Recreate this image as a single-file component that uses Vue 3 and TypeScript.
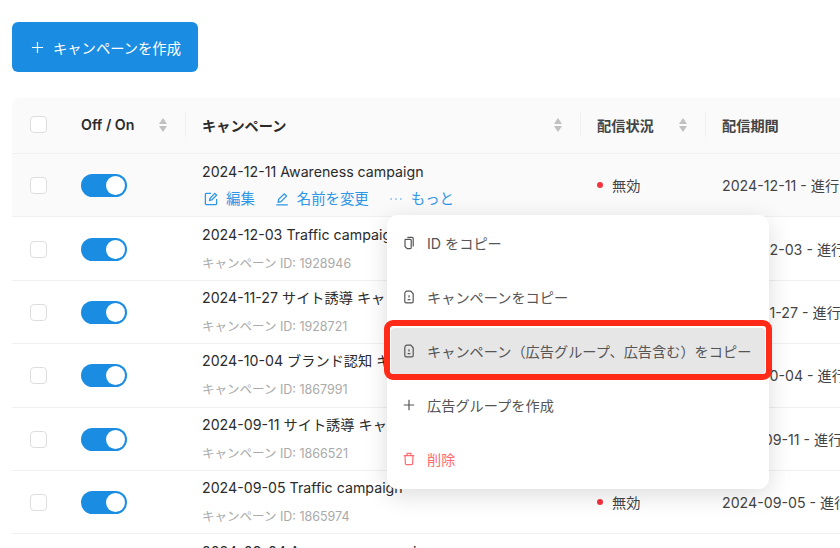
<script setup lang="ts">
interface Row { title: string; id: string; start: string }
const rows: Row[] = [
  { title: '2024-12-11 Awareness campaign', id: '', start: '2024-12-11' },
  { title: '2024-12-03 Traffic campaign', id: '1928946', start: '2024-12-03' },
  { title: '2024-11-27 サイト誘導 キャンペーン', id: '1928721', start: '2024-11-27' },
  { title: '2024-10-04 ブランド認知 キャンペーン', id: '1867991', start: '2024-10-04' },
  { title: '2024-09-11 サイト誘導 キャンペーン', id: '1866521', start: '2024-09-11' },
  { title: '2024-09-05 Traffic campaign', id: '1865974', start: '2024-09-05' },
  { title: '2024-09-04 Awareness campaign', id: '1865901', start: '2024-09-04' },
]
</script>

<template>
  <div class="page">
    <button class="create">
      <svg class="plus" viewBox="0 0 14 14"><path d="M7 1v12M1 7h12" /></svg>
      <span>キャンペーンを作成</span>
    </button>

    <div class="table">
      <div class="row head">
        <div class="c-check"><span class="check"></span></div>
        <div class="c-switch hcell">
          <span>Off / On</span>
          <span class="sort"><i class="up"></i><i class="down"></i></span>
        </div>
        <div class="c-name hcell">
          <span>キャンペーン</span>
          <span class="sort"><i class="up"></i><i class="down"></i></span>
        </div>
        <div class="c-status hcell">
          <span>配信状況</span>
          <span class="sort"><i class="up"></i><i class="down"></i></span>
        </div>
        <div class="c-period hcell"><span>配信期間</span></div>
      </div>

      <div v-for="(r, i) in rows" :key="r.title" class="row body" :class="{ hover: i === 0 }">
        <div class="c-check"><span class="check"></span></div>
        <div class="c-switch"><span class="switch"><span class="knob"></span></span></div>
        <div class="c-name">
          <div class="title">{{ r.title }}</div>
          <div v-if="i === 0" class="actions">
            <span class="action">
              <svg viewBox="0 0 14 14"><path d="M12.6 7v4.8a.8.8 0 0 1-.8.8H2.2a.8.8 0 0 1-.8-.8V2.2a.8.8 0 0 1 .8-.8H7M5.6 8.4l.4-2.2 4.8-4.8 1.8 1.8-4.8 4.8z" /></svg>
              編集
            </span>
            <span class="action">
              <svg viewBox="0 0 14 14"><path d="M1.2 12.8h11.6M3.2 10.2l.5-2.8 5.5-5.6 2.3 2.3-5.5 5.6z" /></svg>
              名前を変更
            </span>
            <span class="action">
              <svg viewBox="0 0 14 14"><path class="dots" d="M1.6 7h1M6.5 7h1M11.4 7h1" /></svg>
              もっと
            </span>
          </div>
          <div v-else class="sub">キャンペーン ID: {{ r.id }}</div>
        </div>
        <div class="c-status"><span class="dot"></span>無効</div>
        <div class="c-period">{{ r.start }} - 進行中</div>
      </div>
    </div>

    <div class="menu">
      <div class="item">
        <svg viewBox="0 0 14 14"><path d="M5.4 1.4h4.8a1 1 0 0 1 1 1v8M3.8 3.4h4.6a.8.8 0 0 1 .8.8v7.6a.8.8 0 0 1-.8.8H5.2L3 10.4V4.2a.8.8 0 0 1 .8-.8z" /></svg>
        <span>ID をコピー</span>
      </div>
      <div class="item">
        <svg viewBox="0 0 14 14"><path d="M5 1.2h3.8l2.4 2.6v7.6a1.4 1.4 0 0 1-1.4 1.4H4.2a1.4 1.4 0 0 1-1.4-1.4V3.4A2.2 2.2 0 0 1 5 1.2zM7 5.2v2.4M5.6 9.6h2.8" /></svg>
        <span>キャンペーンをコピー</span>
      </div>
      <div class="item active">
        <svg viewBox="0 0 14 14"><path d="M5 1.2h3.8l2.4 2.6v7.6a1.4 1.4 0 0 1-1.4 1.4H4.2a1.4 1.4 0 0 1-1.4-1.4V3.4A2.2 2.2 0 0 1 5 1.2zM7 5.2v2.4M5.6 9.6h2.8" /></svg>
        <span>キャンペーン（広告グループ、広告含む）をコピー</span>
        <span class="mark"></span>
      </div>
      <div class="item">
        <svg viewBox="0 0 14 14"><path d="M7 1.8v10.4M1.8 7h10.4" /></svg>
        <span>広告グループを作成</span>
      </div>
      <div class="item danger">
        <svg viewBox="0 0 14 14"><path d="M1.8 3.6h10.4M4.8 3.6l.4-2.2h3.6l.4 2.2M3 3.6l.4 8a1 1 0 0 0 1 1h5.2a1 1 0 0 0 1-1l.4-8" /></svg>
        <span>削除</span>
      </div>
    </div>
  </div>
</template>

<style>
html, body { margin: 0; overflow: hidden; background: #fff; }
</style>

<style scoped>
.page {
  position: relative;
  width: 840px;
  height: 548px;
  overflow: hidden;
  padding: 22px 0 0 12px;
  box-sizing: border-box;
  font-family: Inter, "Noto Sans CJK JP", sans-serif;
  font-size: 14.2px;
  color: #2b2b2b;
}
.create {
  display: flex;
  align-items: center;
  gap: 9px;
  width: 186px;
  height: 50px;
  padding: 0 0 0 19px;
  border: 0;
  border-radius: 6px;
  background: #1a8de3;
  color: #fff;
  font: inherit;
  font-size: 14.3px;
}
.plus { width: 13px; height: 13px; fill: none; stroke: #fff; stroke-width: 1.3; }
.table {
  width: 1000px;
  margin-top: 26px;
}
.row { display: flex; align-items: center; }
.head {
  height: 56px;
  padding-bottom: 2px;
  background: #fafafa;
  border-radius: 8px 0 0 0;
  border-bottom: 1px solid #f0f0f0;
  box-sizing: border-box;
  font-weight: 600;
  color: #2b2b2b;
}
.body {
  height: 63.4px;
  box-sizing: border-box;
  border-bottom: 1px solid #f0f0f0;
}
.hover { background: #fafafa; }
.c-check { width: 69px; padding-left: 18px; box-sizing: border-box; display: flex; }
.body .c-check, .body .c-switch { padding-top: 1px; }
.c-switch { width: 104px; box-sizing: border-box; }
.c-name { width: 395px; padding-left: 17px; box-sizing: border-box; white-space: nowrap; overflow: hidden; }
.c-status { width: 125px; padding-left: 17px; box-sizing: border-box; display: flex; align-items: center; color: #444; }
.c-period { flex: 1; padding-left: 17px; box-sizing: border-box; white-space: nowrap; color: #444; }
.hcell { position: relative; display: flex; align-items: center; justify-content: space-between; height: 24px; }
.c-switch.hcell { padding-right: 18px; }
.c-name.hcell, .c-status.hcell { padding-right: 18px; }
.c-period.hcell { justify-content: flex-start; }
.hcell + .hcell::before {
  content: "";
  position: absolute;
  left: 0;
  top: 0;
  bottom: 0;
  width: 1px;
  background: #f0f0f0;
}
.check {
  width: 17px;
  height: 17px;
  box-sizing: border-box;
  border: 1px solid #dedede;
  border-radius: 4px;
  background: #fff;
}
.sort { display: flex; flex-direction: column; gap: 2px; }
.sort i { display: block; width: 0; height: 0; border-left: 4px solid transparent; border-right: 4px solid transparent; }
.sort .up { border-bottom: 6px solid #c0c0c0; }
.sort .down { border-top: 6px solid #c0c0c0; }
.switch {
  display: block;
  position: relative;
  width: 46px;
  height: 23px;
  border-radius: 12px;
  background: #1a8de3;
}
.knob {
  position: absolute;
  right: 2px;
  top: 2px;
  width: 19px;
  height: 19px;
  border-radius: 50%;
  background: #fff;
}
.title { line-height: 20px; }
.sub { margin-top: 10px; font-size: 12.5px; line-height: 18px; color: #aaa; }
.actions { display: flex; gap: 20px; margin-top: 7px; margin-left: 2px; font-size: 14.4px; line-height: 20px; color: #2d96e6; }
.action { display: flex; align-items: center; gap: 8px; }
.action svg { width: 14px; height: 14px; fill: none; stroke: #2d96e6; stroke-width: 1.3; }
.dot { width: 6px; height: 6px; border-radius: 50%; background: #f5333f; margin-right: 9px; }
.menu {
  position: absolute;
  left: 387px;
  top: 215px;
  width: 382px;
  height: 274px;
  padding: 5px 4px 0;
  box-sizing: border-box;
  background: #fff;
  border-radius: 10px;
  box-shadow: 0 6px 24px rgba(0, 0, 0, 0.14);
  display: flex;
  flex-direction: column;
  gap: 8px;
}
.item {
  position: relative;
  display: flex;
  align-items: center;
  gap: 11px;
  height: 46px;
  flex: none;
  padding-left: 11px;
  border-radius: 4px;
  color: #555;
}
.item svg { width: 14px; height: 14px; fill: none; stroke: #555; stroke-width: 1.2; flex: none; }
.active { background: #e6e6e6; }
.danger { color: #ff6b70; }
.danger svg { stroke: #ff6b70; }
.mark {
  position: absolute;
  inset: -8px -7px -6px -7px;
  border: 6px solid #ff2a18;
  border-radius: 9px;
  box-sizing: border-box;
}
</style>
